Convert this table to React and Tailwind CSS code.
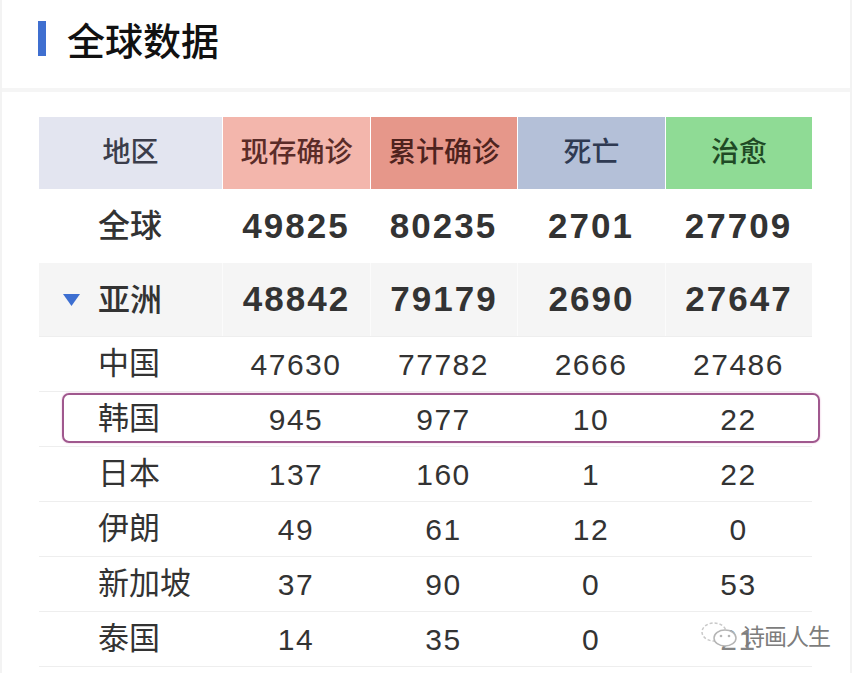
import React from "react";

const columns = [
  { label: "地区", cls: "bg-[#e3e5f0] text-[#3b3d4a]" },
  { label: "现存确诊", cls: "bg-[#f3b6ac] text-[#5a2c28]" },
  { label: "累计确诊", cls: "bg-[#e6978a] text-[#4e231e]" },
  { label: "死亡", cls: "bg-[#b4c0d8] text-[#2f3a52]" },
  { label: "治愈", cls: "bg-[#8fdb95] text-[#1f4a25]" },
];

const rows = [
  { name: "全球", values: [49825, 80235, 2701, 27709], bold: true },
  { name: "亚洲", values: [48842, 79179, 2690, 27647], bold: true, gray: true, arrow: true },
  { name: "中国", values: [47630, 77782, 2666, 27486] },
  { name: "韩国", values: [945, 977, 10, 22] },
  { name: "日本", values: [137, 160, 1, 22] },
  { name: "伊朗", values: [49, 61, 12, 0] },
  { name: "新加坡", values: [37, 90, 0, 53] },
  { name: "泰国", values: [14, 35, 0, 21] },
];

const Row = ({ row }) => {
  const height = row.bold ? "h-[74px]" : "h-[55px]";
  const border = row.bold && !row.gray ? "" : "border-b border-[#eeeeee]";
  return (
    <div
      className={`grid grid-cols-[183px_148px_147px_148px_147px] ${height} ${border} ${
        row.gray ? "bg-[#f5f5f5]" : ""
      }`}
    >
      <div
        className={`flex items-center ${row.arrow ? "pl-[24px]" : "pl-[59px]"} ${
          row.bold ? "text-[32px] font-medium" : "text-[31px]"
        } text-[#333]`}
      >
        {row.arrow && (
          <svg width="17" height="12" viewBox="0 0 17 12" className="mr-[18px]">
            <polygon points="0,0 17,0 8.5,12" fill="#3d6fd1" />
          </svg>
        )}
        {row.name}
      </div>
      {row.values.map((v, i) => (
        <div
          key={i}
          className={`flex items-center justify-center text-[#333] ${
            row.gray ? "border-l border-[#fbfbfb]" : ""
          } ${
            row.bold
              ? "text-[35px] font-bold tracking-[2px]"
              : "text-[30px] tracking-[1.5px]"
          }`}
        >
          {v}
        </div>
      ))}
    </div>
  );
};

const App = () => {
  return (
    <div className="w-[852px] h-[673px] bg-white overflow-hidden relative border-l-2 border-r-2 border-[#f3f3f3] font-['Liberation_Sans','Noto_Sans_CJK_SC',sans-serif]">
      <div className="h-[88px] flex items-start pt-[21px] pl-[36px]">
        <div className="w-[8px] h-[35px] bg-[#3f6fd0]" />
        <h1 className="ml-[21px] text-[38px] leading-[35px] font-medium text-[#111] font-['Noto_Sans_CJK_SC',sans-serif]">
          全球数据
        </h1>
      </div>
      <div className="h-[4px] bg-[#f5f5f5]" />

      <div className="pt-[25px] pl-[37px]">
        <div className="relative w-[773px]">
          <div className="grid grid-cols-[183px_148px_147px_148px_147px] h-[72px]">
            {columns.map((c, i) => (
              <div
                key={c.label}
                className={`flex items-center justify-center text-[28px] font-medium ${c.cls} ${
                  i > 0 ? "border-l border-white" : ""
                }`}
              >
                {c.label}
              </div>
            ))}
          </div>

          {rows.map((row) => (
            <Row key={row.name} row={row} />
          ))}

          <div className="absolute left-[23px] top-[276px] w-[758px] h-[50px] rounded-[7px] border-2 border-[#a0588e] shadow-[0_0_2px_#e7b3d6] pointer-events-none" />
        </div>
      </div>

      <div className="absolute left-[698px] top-[618px] flex items-center bg-white/40">
        <svg width="40" height="30" viewBox="0 0 40 30" className="mr-[2px]">
          <ellipse cx="14" cy="12" rx="12" ry="9" fill="none" stroke="#c9c9c9" strokeWidth="1.5" strokeDasharray="3 2" />
          <ellipse cx="25" cy="18" rx="11" ry="8" fill="white" stroke="#b5b5b5" strokeWidth="1.5" />
          <circle cx="21" cy="16" r="1.3" fill="#b5b5b5" />
          <circle cx="29" cy="16" r="1.3" fill="#b5b5b5" />
        </svg>
        <span className="text-[23px] text-[#7d7d7d] font-['Noto_Sans_CJK_SC',sans-serif] tracking-[-1px]">
          诗画人生
        </span>
      </div>
    </div>
  );
};

export default App;
